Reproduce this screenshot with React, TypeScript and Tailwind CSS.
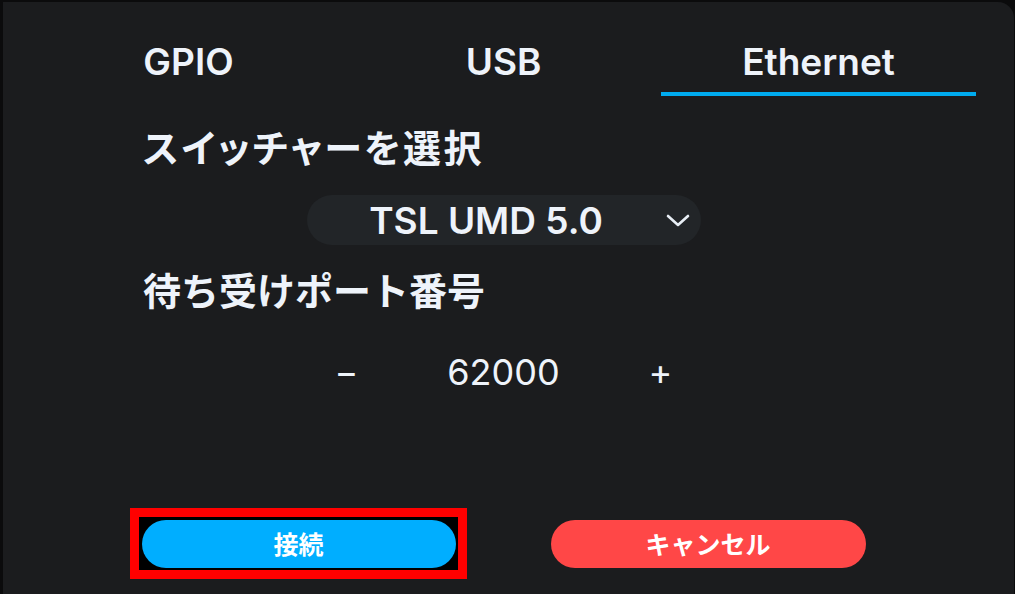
import { useState } from "react";

const tabs = ["GPIO", "USB", "Ethernet"];

const latin = "font-['Inter','Noto_Sans_CJK_JP',sans-serif]";
const jp = "font-['Noto_Sans_CJK_JP','Inter',sans-serif]";

function Chevron() {
  return (
    <svg width="24" height="13" viewBox="0 0 24 13" fill="none" aria-hidden>
      <path d="M2 2l10 9 10-9" stroke="#e8eef5" strokeWidth="2.6" strokeLinecap="round" strokeLinejoin="round" />
    </svg>
  );
}

export default function App() {
  const [active, setActive] = useState(2);
  const [port, setPort] = useState(62000);

  return (
    <div className="w-[1015px] h-[594px] bg-[#0b0b0c] pl-[3px] pt-[2px] pr-[1px] overflow-hidden">
      <div className="h-full bg-[#1b1c1e] rounded-tr-[16px] text-[#eef3fa]">
        {/* Tabs */}
        <div className="ml-[28px] w-[945px] pt-[38px] grid grid-cols-3">
          {tabs.map((t, i) => (
            <button key={t} onClick={() => setActive(i)} className="flex flex-col items-center">
              <span className={`${latin} text-[37px] leading-[44px] font-semibold`}>{t}</span>
              <span className={`mt-[8px] h-[4px] w-full ${i === active ? "bg-[#00abef]" : "bg-transparent"}`} />
            </button>
          ))}
        </div>

        {/* Switcher select */}
        <div className={`${jp} mt-[26px] pl-[140px] text-[38px] leading-[48px] font-bold tracking-[2.5px] [font-feature-settings:'palt']`}>
          スイッチャーを選択
        </div>
        <div className="ml-[28px] w-[945px] mt-[25px]">
          <div className="mx-auto w-[394px] h-[50px] rounded-full bg-[#222528] flex items-center pr-[11px]">
            <span className={`${latin} flex-1 text-center text-[37px] font-semibold leading-none`}>TSL UMD 5.0</span>
            <Chevron />
          </div>
        </div>

        {/* Port */}
        <div className={`${jp} mt-[20px] pl-[140px] text-[38px] leading-[48px] font-bold`}>
          待ち受けポート番号
        </div>
        <div className={`${latin} ml-[28px] w-[945px] mt-[35px] grid grid-cols-[157px_157px_157px] justify-center items-center h-[48px] text-[36px]`}>
          <button onClick={() => setPort(port - 1)} className="text-center leading-none">−</button>
          <span className="text-center leading-none">{port}</span>
          <button onClick={() => setPort(port + 1)} className="text-center leading-none">+</button>
        </div>

        {/* Actions */}
        <div className={`${jp} ml-[28px] w-[945px] mt-[124px] flex justify-center gap-[95px]`}>
          <div className="relative">
            <div className="absolute -left-[12px] -top-[12px] -right-[11px] -bottom-[11px] border-[9px] border-[#ff0000] bg-black" />
            <button className="relative w-[314px] h-[48px] rounded-full bg-[#00aeff] text-white text-[25px] font-bold">
              接続
            </button>
          </div>
          <button className="w-[315px] h-[48px] rounded-full bg-[#ff4747] text-white text-[25px] font-bold">
            キャンセル
          </button>
        </div>
      </div>
    </div>
  );
}
